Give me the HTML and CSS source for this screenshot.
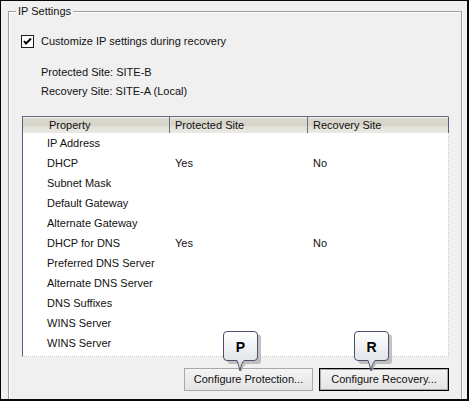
FILE: index.html
```html
<!DOCTYPE html>
<html>
<head>
<meta charset="utf-8">
<link rel="stylesheet" href="styles.css">
</head>
<body>
<div class="window">
  <div class="group">
    <span class="legend">IP Settings</span>
    <div class="check-row">
      <span class="checkbox"><svg width="11" height="11" viewBox="0 0 11 11"><polyline points="2,5 4,7.5 9,2.5" fill="none" stroke="#000" stroke-width="2"/></svg></span>
      <span>Customize IP settings during recovery</span>
    </div>
    <div class="site first">Protected Site: SITE-B</div>
    <div class="site">Recovery Site: SITE-A (Local)</div>
    <div class="listbox">
      <div class="lv-head">
        <div class="hc c1">Property</div>
        <div class="hc c2">Protected Site</div>
        <div class="hc c3">Recovery Site</div>
      </div>
      <div class="lv-row"><div class="c1">IP Address</div><div class="c2"></div><div class="c3"></div></div>
      <div class="lv-row"><div class="c1">DHCP</div><div class="c2">Yes</div><div class="c3">No</div></div>
      <div class="lv-row"><div class="c1">Subnet Mask</div><div class="c2"></div><div class="c3"></div></div>
      <div class="lv-row"><div class="c1">Default Gateway</div><div class="c2"></div><div class="c3"></div></div>
      <div class="lv-row"><div class="c1">Alternate Gateway</div><div class="c2"></div><div class="c3"></div></div>
      <div class="lv-row"><div class="c1">DHCP for DNS</div><div class="c2">Yes</div><div class="c3">No</div></div>
      <div class="lv-row"><div class="c1">Preferred DNS Server</div><div class="c2"></div><div class="c3"></div></div>
      <div class="lv-row"><div class="c1">Alternate DNS Server</div><div class="c2"></div><div class="c3"></div></div>
      <div class="lv-row"><div class="c1">DNS Suffixes</div><div class="c2"></div><div class="c3"></div></div>
      <div class="lv-row"><div class="c1">WINS Server</div><div class="c2"></div><div class="c3"></div></div>
      <div class="lv-row"><div class="c1">WINS Server</div><div class="c2"></div><div class="c3"></div></div>
    </div>
    <div class="buttons">
      <div class="btn-wrap">
        <div class="btn">Configure Protection...</div>
        <svg class="callout callout-p" width="40" height="46" viewBox="0 0 40 46">
          <defs>
            <linearGradient id="cg1" x1="0" y1="0" x2="0" y2="1">
              <stop offset="0" stop-color="#ffffff"/>
              <stop offset="1" stop-color="#d9dbe3"/>
            </linearGradient>
          </defs>
          <path d="M7.5 3.5 H35 Q38 3.5 38 6.5 V30 Q38 33 35 33 H23 Q20 35 18.5 41 Q17 36 16 33 H7.5 Q4.5 33 4.5 30 V6.5 Q4.5 3.5 7.5 3.5 Z" fill="#a8a8a8" opacity="0.7"/>
          <path d="M4 0.5 H31 Q34.5 0.5 34.5 4 V26 Q34.5 29.5 31 29.5 H21 Q18 32 17 40 Q15.5 33 14 29.5 H4 Q0.5 29.5 0.5 26 V4 Q0.5 0.5 4 0.5 Z" fill="url(#cg1)" stroke="#4a5068" stroke-width="1"/>
          <text x="17.5" y="20.5" text-anchor="middle" class="callout-letter">P</text>
        </svg>
      </div>
      <div class="btn-wrap">
        <div class="btn default">Configure Recovery...</div>
        <svg class="callout callout-r" width="40" height="46" viewBox="0 0 40 46">
          <defs>
            <linearGradient id="cg2" x1="0" y1="0" x2="0" y2="1">
              <stop offset="0" stop-color="#ffffff"/>
              <stop offset="1" stop-color="#d9dbe3"/>
            </linearGradient>
          </defs>
          <path d="M7.5 3.5 H35 Q38 3.5 38 6.5 V30 Q38 33 35 33 H23 Q20 35 18.5 41 Q17 36 16 33 H7.5 Q4.5 33 4.5 30 V6.5 Q4.5 3.5 7.5 3.5 Z" fill="#a8a8a8" opacity="0.7"/>
          <path d="M4 0.5 H31 Q34.5 0.5 34.5 4 V26 Q34.5 29.5 31 29.5 H21 Q18 32 17 40 Q15.5 33 14 29.5 H4 Q0.5 29.5 0.5 26 V4 Q0.5 0.5 4 0.5 Z" fill="url(#cg2)" stroke="#4a5068" stroke-width="1"/>
          <text x="17.5" y="20.5" text-anchor="middle" class="callout-letter">R</text>
        </svg>
      </div>
    </div>
  </div>
</div>
</body>
</html>
```

FILE: styles.css
```css
* { box-sizing: border-box; }

html, body {
  margin: 0;
  padding: 0;
  background: #f0f0f0;
}

body {
  font-family: "Liberation Sans", Arial, sans-serif;
  font-size: 11px;
  color: #111;
}

.window {
  width: 469px;
  height: 401px;
  border-style: solid;
  border-color: #0c0508;
  border-width: 1px 2px 2px 1px;
  background: #f0f0f0;
  overflow: hidden;
  padding: 10px 0 0 7px;
}

.group {
  position: relative;
  width: 454px;
  height: 420px;
  border: 1px solid #a0a0a0;
  box-shadow: inset 1px 1px 0 #ffffff, 1px 1px 0 #ffffff;
  padding: 0;
  display: flex;
  flex-direction: column;
}

.legend {
  position: absolute;
  top: -8px;
  left: 7px;
  padding: 0 2px;
  background: #f0f0f0;
  line-height: 14px;
}

.check-row {
  display: flex;
  align-items: center;
  gap: 7px;
  margin-top: 23px;
  margin-left: 12px;
  height: 13px;
  line-height: 13px;
}

.checkbox {
  width: 13px;
  height: 13px;
  border: 1px solid #1c1c1c;
  background: #fff;
  display: flex;
  align-items: center;
  justify-content: center;
  flex: none;
}

.checkbox svg { display: block; }

.site {
  margin-left: 32px;
  line-height: 14px;
  margin-top: 5px;
}

.site.first { margin-top: 17px; }

.listbox {
  margin-top: 18px;
  margin-left: 13px;
  width: 427px;
  height: 241px;
  background: #fff;
  border-left: 1px solid #5a5c80;
  border-top: 1px solid #6a6c88;
  border-right: 1px dotted #c8c8c8;
  border-bottom: 1px dotted #c8c8c8;
  flex: none;
}

.lv-head,
.lv-row {
  display: grid;
  grid-template-columns: 146px 138px 1fr;
}

.lv-head {
  height: 16px;
  line-height: 16px;
  background:
    linear-gradient(#ecebe7 0, #ecebe7 1px, #d9d6cc 2px, #d6d3c8 8px, #e2e0d8 10px, #ebe9e4 16px);
  border-right: 1px solid #5a5c80;
  margin-right: -1px;
}

.hc { white-space: nowrap; }

.lv-head .c1 { padding-left: 26px; }
.lv-head .c2 { padding-left: 5px; border-left: 1px solid #6a6c88; }
.lv-head .c3 { padding-left: 5px; border-left: 1px solid #6a6c88; }

.lv-row {
  height: 20px;
  line-height: 20px;
}

.lv-row .c1 { padding-left: 24px; }
.lv-row .c2 { padding-left: 6px; }
.lv-row .c3 { padding-left: 6px; }

.buttons {
  display: flex;
  justify-content: flex-end;
  gap: 6px;
  margin-top: 11px;
  padding-right: 12px;
}

.btn-wrap {
  position: relative;
}

.btn {
  height: 23px;
  line-height: 21px;
  text-align: center;
  border: 1px solid #a9a9a9;
  background: linear-gradient(#f4f4f4, #e4e4e4);
  width: 129px;
  white-space: nowrap;
}

.btn.default {
  width: 130px;
  border: 1px solid #000;
  box-shadow: inset 0 0 0 1px #a9a9a9;
}

.callout {
  position: absolute;
  top: -37px;
  display: block;
  overflow: visible;
}

.callout-p { left: 39px; }
.callout-r { left: 35px; }

.callout-letter {
  font-family: "Liberation Sans", Arial, sans-serif;
  font-weight: bold;
  font-size: 14px;
  fill: #000;
}
```
